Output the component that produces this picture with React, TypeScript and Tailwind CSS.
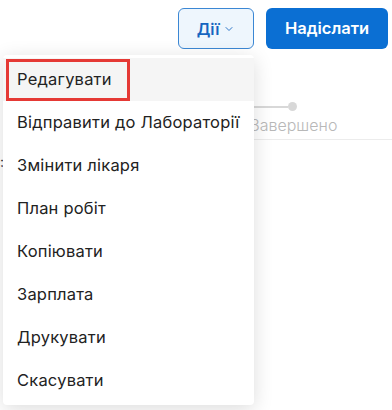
import { ChevronDown } from "lucide-react";

const items = [
  "Редагувати",
  "Відправити до Лабораторії",
  "Змінити лікаря",
  "План робіт",
  "Копіювати",
  "Зарплата",
  "Друкувати",
  "Скасувати",
];

export default function App() {
  return (
    <div
      className="relative h-[410px] w-[392px] overflow-hidden bg-white text-[#222]"
      style={{ fontFamily: "Inter, 'Noto Sans', sans-serif" }}
    >
      <div className="flex justify-end gap-3 pr-1 pt-2">
        <button
          type="button"
          className="flex h-[41px] w-[76px] items-center justify-center gap-1 rounded-md border border-[#3b87d4] bg-[#eef6fd] text-[16px] font-semibold text-[#1565c0]"
        >
          Дії
          <ChevronDown className="h-3 w-3" strokeWidth={1.75} />
        </button>
        <button
          type="button"
          className="h-[41px] w-[122px] rounded-md bg-[#0b6fd3] text-[16.5px] font-semibold text-white"
        >
          Надіслати
        </button>
      </div>

      {/* page content behind the menu */}
      <div className="mt-[53px] pl-[250px]">
        <div className="flex items-center">
          <div className="h-[2px] w-[38px] bg-[#d8d8d8]" />
          <div className="h-[9px] w-[9px] rounded-full bg-[#d8d8d8]" />
        </div>
        <div className="mt-[2px] text-[16px] font-light text-[#b8b8b8]">Завершено</div>
        <div className="mt-[2px] h-px bg-[#ececec]" />
      </div>

      <div className="absolute left-0 top-[155px] text-[14px] leading-none text-[#333]">:</div>

      <div className="absolute left-[3px] top-[55px] w-[251px] rounded bg-white py-[3px] shadow-[0_4px_20px_rgba(0,0,0,0.14)]">
        {items.map((label, i) => (
          <div
            key={label}
            className={
              i === 0
                ? "flex h-[43px] items-center bg-[#f5f5f5] pl-[14px] text-[16.5px] tracking-[0.2px]"
                : "flex h-[43px] items-center pl-[14px] text-[16.5px] tracking-[0.2px]"
            }
          >
            {i === 0 ? (
              <span className="-ml-[11px] flex h-[42px] w-[124px] items-center border-[3px] border-[#e53935] pl-[8px]">
                {label}
              </span>
            ) : (
              label
            )}
          </div>
        ))}
      </div>
    </div>
  );
}
